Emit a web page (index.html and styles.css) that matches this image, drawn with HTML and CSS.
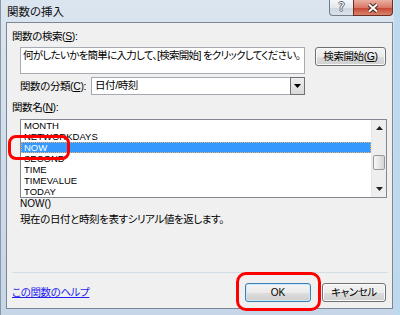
FILE: index.html
```html
<!DOCTYPE html>
<html lang="ja">
<head>
    <meta charset="UTF-8">
    <title>関数の挿入</title>
    <link rel="stylesheet" href="styles.css">
</head>
<body>
    <div class="window">
        <div class="titlebar">
            <span class="title">関数の挿入</span>
            <div class="caption-buttons">
                <span class="cap-help">?</span>
                <span class="cap-close">
                    <svg width="12" height="10" viewBox="0 0 12 10">
                        <path d="M2 1.5 L10 8.5 M10 1.5 L2 8.5" stroke="#4d2620" stroke-width="4"/>
                        <path d="M2 1.5 L10 8.5 M10 1.5 L2 8.5" stroke="#fff" stroke-width="2"/>
                    </svg>
                </span>
            </div>
        </div>

        <div class="client">
            <div class="label first">関数の検索(<u>S</u>):</div>
            <div class="search-row">
                <div class="search-box">何がしたいかを簡単に入力して、[検索開始] をクリックしてください。</div>
                <button class="btn search-btn">検索開始(<u>G</u>)</button>
            </div>

            <div class="category-row">
                <span class="category-label">関数の分類(<u>C</u>):</span>
                <div class="combo">
                    <span class="combo-text">日付/時刻</span>
                    <span class="combo-arrow">
                        <svg width="7" height="4" viewBox="0 0 7 4"><path d="M0 0 H7 L3.5 4 Z" fill="#000"/></svg>
                    </span>
                </div>
            </div>

            <div class="label">関数名(<u>N</u>):</div>
            <div class="listbox">
                <ul class="items">
                    <li>MONTH</li>
                    <li>NETWORKDAYS</li>
                    <li class="selected">NOW</li>
                    <li>SECOND</li>
                    <li>TIME</li>
                    <li>TIMEVALUE</li>
                    <li>TODAY</li>
                </ul>
                <div class="scrollbar">
                    <span class="sb-arrow">
                        <svg width="7" height="4" viewBox="0 0 7 4"><path d="M0 4 H7 L3.5 0 Z" fill="#222"/></svg>
                    </span>
                    <span class="sb-track"><span class="sb-thumb"></span></span>
                    <span class="sb-arrow">
                        <svg width="7" height="4" viewBox="0 0 7 4"><path d="M0 0 H7 L3.5 4 Z" fill="#222"/></svg>
                    </span>
                </div>
            </div>

            <div class="syntax">NOW()</div>
            <div class="desc">現在の日付と時刻を表すシリアル値を返します。</div>

            <div class="spacer"></div>
            <div class="separator"></div>

            <div class="footer">
                <a class="help-link" href="#">この関数のヘルプ</a>
                <div class="footer-buttons">
                    <button class="btn ok-btn">OK</button>
                    <button class="btn cancel-btn">キャンセル</button>
                </div>
            </div>
        </div>

        <div class="mark mark-now"></div>
        <div class="mark mark-ok"></div>
    </div>
</body>
</html>
```

FILE: styles.css
```css
* {
    margin: 0;
    padding: 0;
    box-sizing: border-box;
}

body {
    background: #fff;
    font-family: "Liberation Sans", "Noto Sans CJK JP", sans-serif;
    font-size: 10.5px;
    letter-spacing: -0.4px;
    color: #000;
    font-feature-settings: "palt";
}

.window {
    position: relative;
    width: 400px;
    height: 315px;
    display: flex;
    flex-direction: column;
    padding: 0 7px 6px 6px;
    background: linear-gradient(#dbe5f0, #cddbea 60%, #c6d6e8);
    box-shadow: inset 1px 0 0 #8a97a5, inset -6px 0 0 #bcd9ee;
    overflow: hidden;
}

/* title bar */
.titlebar {
    height: 22px;
    display: flex;
    justify-content: space-between;
    align-items: flex-start;
}

.title {
    font-size: 11.5px;
    line-height: 14px;
    padding: 5px 0 0 1px;
    letter-spacing: 0;
    color: #111;
}

.caption-buttons {
    display: flex;
}

.cap-help {
    width: 24px;
    height: 16px;
    border: 1px solid #707d8b;
    border-top: none;
    border-right: none;
    border-radius: 0 0 0 4px;
    background: linear-gradient(#f5f7f9, #e3e8ee 50%, #cdd5de 51%, #dbe2ea);
    font: 12px/15px "DejaVu Sans", sans-serif;
    letter-spacing: 0;
    color: #fff;
    text-align: center;
    text-shadow: 1px 0 0 #5a6470, -1px 0 0 #5a6470, 0 1px 0 #5a6470, 0 -1px 0 #5a6470;
}

.cap-close {
    width: 40px;
    height: 16px;
    border: 1px solid #6d2c24;
    border-top: none;
    border-radius: 0 0 4px 0;
    background: linear-gradient(#eab0a2, #d9786a 50%, #c5432f 51%, #d8846c);
    display: flex;
    align-items: center;
    justify-content: center;
}

/* dialog body */
.client {
    flex: 1;
    display: flex;
    flex-direction: column;
    background: #f0f0f0;
    border: 1px solid #7a8795;
    padding: 0 5px 6px 5px;
}

.label {
    line-height: 13px;
    margin-top: 6px;
}

.label.first {
    margin-top: 7px;
}

.search-row {
    display: flex;
    align-items: flex-start;
    gap: 10px;
    margin: 4px 0 0 8px;
}

.search-box {
    width: 285px;
    height: 27px;
    background: #fff;
    border: 1px solid #a7abb2;
    padding: 1px 0 0 2px;
    line-height: 13px;
    letter-spacing: -0.7px;
    white-space: nowrap;
    overflow: hidden;
}

.btn {
    height: 19px;
    border: 1px solid #707070;
    border-radius: 3px;
    background: linear-gradient(#f3f3f3, #ebebeb 50%, #dddddd 51%, #cfcfcf);
    box-shadow: inset 0 0 0 1px #fbfbfb;
    font: 10.5px/17px "Liberation Sans", "Noto Sans CJK JP", sans-serif;
    letter-spacing: -0.4px;
    font-feature-settings: "palt";
    color: #000;
    text-align: center;
}

.search-btn {
    width: 71px;
}

.category-row {
    display: flex;
    align-items: center;
    height: 18px;
    margin: 3px 0 0 8px;
}

.category-label {
    width: 71px;
    line-height: 13px;
    white-space: nowrap;
}

.combo {
    width: 214px;
    height: 18px;
    display: flex;
    background: #fff;
    border: 1px solid #a5a9af;
}

.combo-text {
    flex: 1;
    padding-left: 3px;
    line-height: 15px;
}

.combo-arrow {
    width: 15px;
    height: 18px;
    margin: -1px -1px 0 0;
    border: 1px solid #707070;
    background: linear-gradient(#eeeeee, #d9d9d9);
    display: flex;
    align-items: center;
    justify-content: center;
}

/* function list */
.listbox {
    display: flex;
    height: 79px;
    margin: 5px 0 0 8px;
    background: #fff;
    border: 1px solid #828790;
}

.items {
    flex: 1;
    list-style: none;
    font: 9.5px/11px "Liberation Sans", sans-serif;
    letter-spacing: 0;
}

.items li {
    height: 11px;
    padding-left: 3px;
}

.items li.selected {
    background: #3399ff;
    color: #fff;
    outline: 1px dotted #f2b36b;
    outline-offset: -1px;
}

.scrollbar {
    width: 15px;
    display: flex;
    flex-direction: column;
    background: #eeeeee;
    border-left: 1px solid #e6e6e6;
}

.sb-arrow {
    height: 16px;
    display: flex;
    align-items: center;
    justify-content: center;
}

.sb-track {
    flex: 1;
    padding: 19px 1px 0 1px;
}

.sb-thumb {
    display: block;
    height: 15px;
    border: 1px solid #979797;
    border-radius: 2px;
    background: linear-gradient(to right, #f6f6f6, #e6e6e6 50%, #d6d6d6);
}

.syntax {
    font: 10px/12px "Liberation Sans", sans-serif;
    letter-spacing: 0;
    margin-left: 8px;
}

.desc {
    line-height: 13px;
    margin: 3px 0 0 8px;
}

.spacer {
    flex: 1;
}

.separator {
    height: 1px;
    background: #d3dde5;
    margin-right: -1px;
}

.footer {
    display: flex;
    justify-content: space-between;
    align-items: center;
    height: 19px;
    margin-top: 10px;
}

.help-link {
    color: #1f1ff0;
    text-decoration: underline;
    line-height: 13px;
}

.footer-buttons {
    display: flex;
    gap: 11px;
    margin-right: 1px;
}

.ok-btn {
    width: 66px;
    border-color: #3c7fb1;
    box-shadow: inset 0 0 0 1px #c9eafc;
    font-family: "Liberation Sans", sans-serif;
    font-size: 10px;
    letter-spacing: 0;
}

.cancel-btn {
    width: 64px;
}

/* red annotation marks */
.mark {
    position: absolute;
    border: 3px solid #ff0000;
    border-radius: 8px;
}

.mark-now {
    left: 8px;
    top: 135px;
    width: 62px;
    height: 25px;
}

.mark-ok {
    left: 236px;
    top: 272px;
    width: 85px;
    height: 39px;
    border-radius: 10px;
}
```
